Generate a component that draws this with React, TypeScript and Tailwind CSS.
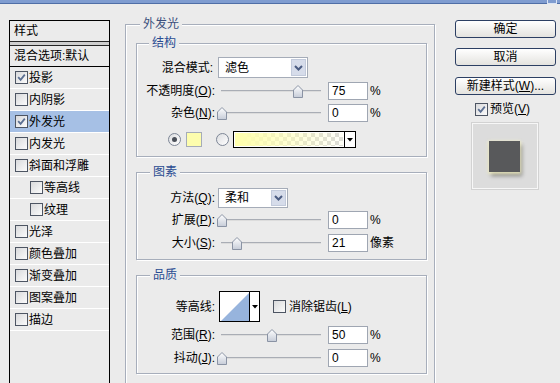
import React from "react";

const Check = ({ checked = false }: { checked?: boolean }) => (
  <span className="flex h-[13px] w-[13px] shrink-0 items-center justify-center border border-[#4d5563] bg-linear-to-br from-[#d9dadc] to-[#fbfbfb]">
    {checked && (
      <svg width="9" height="9" viewBox="0 0 9 9">
        <path d="M1.2 4.2 L3.6 6.8 L7.8 1.6" fill="none" stroke="#5b6f92" strokeWidth="1.8" />
      </svg>
    )}
  </span>
);

const Radio = ({ on = false }: { on?: boolean }) => (
  <span className="flex h-[13px] w-[13px] shrink-0 items-center justify-center rounded-full border border-[#7d8696] bg-linear-to-br from-[#dcdde0] to-white">
    {on && <span className="h-[5px] w-[5px] rounded-full bg-[#4a4f58]" />}
  </span>
);

const Thumb = () => (
  <svg width="10" height="13" viewBox="0 0 10 13">
    <defs>
      <linearGradient id="thumbg" x1="0" y1="0" x2="0" y2="1">
        <stop offset="0" stopColor="#ffffff" />
        <stop offset="1" stopColor="#c6ccd8" />
      </linearGradient>
    </defs>
    <path d="M0.5 5 L5 0.5 L9.5 5 V12.5 H0.5 Z" fill="url(#thumbg)" stroke="#8a93a4" />
  </svg>
);

const Chevron = () => (
  <svg width="9" height="6" viewBox="0 0 9 6">
    <path d="M1 1 L4.5 4.5 L8 1" fill="none" stroke="#4b5c82" strokeWidth="2" />
  </svg>
);

const Tri = () => (
  <svg width="6" height="4" viewBox="0 0 6 4">
    <path d="M0 0 H6 L3 3.5 Z" fill="#000" />
  </svg>
);

function Group({
  title,
  className,
  legendClass,
  children,
}: {
  title: string;
  className: string;
  legendClass: string;
  children?: React.ReactNode;
}) {
  return (
    <div
      className={
        "relative flex flex-col border border-[#a7aebb] shadow-[1px_1px_0_#ffffff,inset_1px_1px_0_#ffffff] " +
        className
      }
    >
      <span
        className={
          "absolute top-[-8px] bg-[#ebebeb] px-[3px] leading-[14px] " + legendClass
        }
      >
        {title}
      </span>
      {children}
    </div>
  );
}

function SliderRow({
  label,
  value,
  thumb,
  unit,
  className,
}: {
  label: React.ReactNode;
  value: string;
  thumb: number;
  unit: string;
  className: string;
}) {
  return (
    <div className={"flex h-[18px] items-center " + className}>
      <div className="w-[79px] whitespace-nowrap pr-[1px] text-right">{label}</div>
      <div className="relative h-full w-[112px]">
        <div className="absolute left-[5px] top-[8px] h-[2px] w-[100px] border-t border-[#a9adb5] bg-[#dcdcdc]" />
        <div className="absolute top-[3px]" style={{ left: thumb }}>
          <Thumb />
        </div>
      </div>
      <div className="flex h-[18px] w-[40px] items-center border border-[#9fa6b2] bg-white pl-[3px]">
        {value}
      </div>
      <span className="ml-[2px]">{unit}</span>
    </div>
  );
}

const items: { t: string; c?: boolean; sel?: boolean; indent?: boolean }[] = [
  { t: "投影", c: true },
  { t: "内阴影" },
  { t: "外发光", c: true, sel: true },
  { t: "内发光" },
  { t: "斜面和浮雕" },
  { t: "等高线", indent: true },
  { t: "纹理", indent: true },
  { t: "光泽" },
  { t: "颜色叠加" },
  { t: "渐变叠加" },
  { t: "图案叠加" },
  { t: "描边" },
];

export default function App() {
  return (
    <div className="h-[383px] w-[560px] overflow-hidden bg-[#ebebeb] font-['Liberation_Sans','Noto_Sans_CJK_SC',sans-serif] text-[12px] leading-[14px] text-black">
      {/* title bar remnant */}
      <div className="flex h-[4px] border-b border-[#4f6ea6] bg-[#7f9cd0]">
        <div className="ml-auto mr-[3px] h-[4px] w-[10px] border-x border-b border-[#dbe4f3]" />
      </div>

      <div className="flex items-start pl-[9px] pt-[16px]">
        {/* left style list */}
        <div className="h-[380px] w-[101px] border border-black">
          <div className="flex h-[20px] items-center pl-[4px]">样式</div>
          <div className="h-[5px] border-y border-[#262626] bg-[#cfcfcf]" />
          <div className="flex h-[21px] items-center border-b border-black pl-[4px]">混合选项:默认</div>
          {items.map((it) => (
            <div
              key={it.t}
              className={
                "flex h-[22px] items-center gap-[1px] border-b border-white " +
                (it.indent ? "pl-[20px] " : "pl-[5px] ") +
                (it.sel ? "bg-[#a6c0e5]" : "")
              }
            >
              <Check checked={it.c} />
              <span>{it.t}</span>
            </div>
          ))}
        </div>

        {/* main group */}
        <div className="ml-[15px] mt-[4px]">
          <Group title="外发光" className="h-[370px] w-[310px]" legendClass="left-[14px] text-[#3b4f7c]">
            <div className="ml-[10px] mt-[18px] flex flex-col">
              {/* 结构 */}
              <Group title="结构" className="h-[114px] w-[291px]" legendClass="left-[12px] text-[#2a4c92]">
                <div className="mt-[13px] flex h-[21px] items-center">
                  <div className="w-[79px] pr-[3px] text-right">混合模式:</div>
                  <div className="ml-[2px] flex h-[21px] w-[90px] items-center border border-[#a5acb8] bg-white">
                    <span className="flex-1 pl-[6px]">滤色</span>
                    <span className="mr-[1px] flex h-[17px] w-[15px] items-center justify-center border border-[#c2cadb] bg-[#d6dcea]">
                      <Chevron />
                    </span>
                  </div>
                </div>
                <SliderRow
                  className="mt-[4px]"
                  label={
                    <>
                      不透明度(<u>O</u>):
                    </>
                  }
                  value="75"
                  thumb={77}
                  unit="%"
                />
                <SliderRow
                  className="mt-[4px]"
                  label={
                    <>
                      杂色(<u>N</u>):
                    </>
                  }
                  value="0"
                  thumb={1}
                  unit="%"
                />
                <div className="ml-[31px] mt-[9px] flex h-[17px] items-center">
                  <Radio on />
                  <span className="ml-[5px] h-[15px] w-[16px] border border-[#a5acb8] bg-[#fdfdad]" />
                  <span className="ml-[14px]">
                    <Radio />
                  </span>
                  <div className="ml-[4px] flex h-[17px] w-[123px] border border-black">
                    <div className="flex-1 border border-white bg-[image:linear-gradient(to_right,#ffffae_5%,rgba(255,255,174,0.1)_95%),repeating-conic-gradient(#dadada_0%_25%,#ffffff_0%_50%)] bg-[length:100%_100%,8px_8px]" />
                    <div className="flex w-[11px] items-center justify-center border-l border-black bg-white">
                      <Tri />
                    </div>
                  </div>
                </div>
              </Group>

              {/* 图素 */}
              <Group title="图素" className="mt-[15px] h-[88px] w-[291px]" legendClass="left-[13px] text-[#2a4c92]">
                <div className="mt-[15px] flex h-[20px] items-center">
                  <div className="w-[79px] pr-[1px] text-right">
                    方法(<u>Q</u>):
                  </div>
                  <div className="ml-[2px] flex h-[20px] w-[70px] items-center border border-[#a5acb8] bg-white">
                    <span className="flex-1 pl-[6px]">柔和</span>
                    <span className="mr-[1px] flex h-[16px] w-[15px] items-center justify-center border border-[#c2cadb] bg-[#d6dcea]">
                      <Chevron />
                    </span>
                  </div>
                </div>
                <SliderRow
                  className="mt-[3px]"
                  label={
                    <>
                      扩展(<u>P</u>):
                    </>
                  }
                  value="0"
                  thumb={1}
                  unit="%"
                />
                <SliderRow
                  className="mt-[5px]"
                  label={
                    <>
                      大小(<u>S</u>):
                    </>
                  }
                  value="21"
                  thumb={16}
                  unit="像素"
                />
              </Group>

              {/* 品质 */}
              <Group title="品质" className="mt-[15px] h-[99px] w-[291px]" legendClass="left-[13px] text-[#2a4c92]">
                <div className="mt-[15px] flex h-[31px] items-center">
                  <div className="w-[79px] pr-[1px] text-right">等高线:</div>
                  <div className="ml-[3px] flex h-[31px] w-[41px] border border-black bg-white">
                    <div className="w-[29px]">
                      <svg width="29" height="29" viewBox="0 0 29 29">
                        <path d="M1 29 L29 1 L29 29 Z" fill="#97b4dd" />
                      </svg>
                    </div>
                    <div className="flex flex-1 items-center justify-center border-l border-black">
                      <Tri />
                    </div>
                  </div>
                  <span className="ml-[13px]">
                    <Check />
                  </span>
                  <span className="ml-[3px]">
                    消除锯齿(<u>L</u>)
                  </span>
                </div>
                <SliderRow
                  className="mt-[4px]"
                  label={
                    <>
                      范围(<u>R</u>):
                    </>
                  }
                  value="50"
                  thumb={51}
                  unit="%"
                />
                <SliderRow
                  className="mt-[5px]"
                  label={
                    <>
                      抖动(<u>J</u>):
                    </>
                  }
                  value="0"
                  thumb={1}
                  unit="%"
                />
              </Group>
            </div>
          </Group>
        </div>

        {/* right column */}
        <div className="ml-[20px] flex w-[101px] flex-col">
          <button className="h-[18px] w-[101px] rounded-[3px] border border-[#2c3f63] bg-linear-to-b from-white to-[#e4e3df] leading-none">
            确定
          </button>
          <button className="mt-[10px] h-[18px] w-[101px] rounded-[3px] border border-[#2c3f63] bg-linear-to-b from-white to-[#e4e3df] leading-none">
            取消
          </button>
          <button className="mt-[11px] h-[18px] w-[101px] rounded-[3px] border border-[#2c3f63] bg-linear-to-b from-white to-[#e4e3df] leading-none">
            新建样式(<u>W</u>)...
          </button>
          <div className="mt-[7px] flex h-[14px] items-center pl-[20px]">
            <Check checked />
            <span className="ml-[2px]">
              预览(<u>V</u>)
            </span>
          </div>
          <div className="ml-[17px] mt-[7px] h-[66px] w-[66px] border border-[#f7f7f7] bg-[#dcdcdc] pl-[16px] pt-[17px] shadow-[0_0_0_1px_#d2d2d2]">
            <div className="h-[31px] w-[31px] bg-[#58595b] shadow-[0_1px_3px_1px_rgba(245,242,195,0.85),2px_4px_4px_rgba(0,0,0,0.4)]" />
          </div>
        </div>
      </div>
    </div>
  );
}
